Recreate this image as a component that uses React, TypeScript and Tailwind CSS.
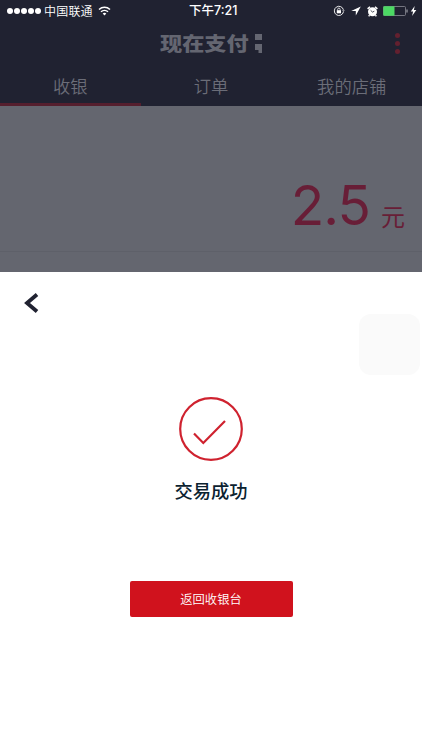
const tabs = [
  { label: "收银", active: true },
  { label: "订单", active: false },
  { label: "我的店铺", active: false },
];

function StatusBar() {
  return (
    <div className="relative flex h-[22px] items-center justify-between pl-[7px] pr-[5px] text-white">
      <div className="flex items-center">
        <div className="flex gap-[1px]">
          {[0, 1, 2, 3, 4].map((dot) => (
            <span key={dot} className="size-[6px] rounded-full bg-white" />
          ))}
        </div>
        <span className="ml-[3px] text-[12px] font-[350] leading-none tracking-[0.2px]">中国联通</span>
        <svg className="ml-[5px]" width="13" height="10" viewBox="0 0 13 10" fill="none" stroke="currentColor" strokeWidth="1.5">
          <path d="M1 3.5C4.2.5 8.8.5 12 3.5" />
          <path d="M3 5.8c2-1.9 5-1.9 7 0" />
          <path d="M4.7 7.5c1-.9 2.6-.9 3.6 0L6.5 9.4Z" fill="currentColor" stroke="none" />
        </svg>
      </div>
      <span className="absolute left-[189px] text-[12.5px] font-medium leading-none">
        下午<span className="font-['Inter']">7:21</span>
      </span>
      <div className="flex items-center">
        <svg width="12" height="12" viewBox="0 0 12 12" fill="none" stroke="currentColor">
          <path d="M10.4 7A4.6 4.6 0 1 1 10.4 4.8" strokeWidth="0.9" />
          <path d="m9 5.4 1.5 1.3L11.8 5.4Z" fill="currentColor" stroke="none" />
          <rect x="3.8" y="5.2" width="4.2" height="3.1" fill="currentColor" stroke="none" />
          <path d="M4.7 5.4V4.3a1.2 1.2 0 0 1 2.4 0v1.1" strokeWidth="0.8" />
        </svg>
        <svg className="ml-[6px]" width="10" height="10" viewBox="0 0 10 10" fill="currentColor">
          <path d="M9.8.4.2 5h4.6v4.6Z" />
        </svg>
        <svg className="ml-[6px]" width="11" height="11" viewBox="0 0 11 11">
          <circle cx="5.5" cy="5.8" r="4.5" fill="currentColor" />
          <path d="M.6 2.9 3 .8M8 .8l2.4 2.1M2.6 9.2l-1 1M8.4 9.2l1 1" stroke="currentColor" strokeWidth="1.5" />
          <path d="M3.6 4.3 5.5 6.1 7.3 5.2" stroke="#202231" strokeWidth="0.8" fill="none" />
        </svg>
        <svg className="ml-[5px]" width="26" height="10" viewBox="0 0 26 10">
          <rect x="0.5" y="0.5" width="22" height="9" rx="1" fill="none" stroke="#8b8c95" strokeWidth="0.8" />
          <rect x="0.3" y="0.3" width="11.2" height="9.4" rx="0.6" fill="#4cd964" />
          <rect x="23.3" y="3.3" width="1.4" height="3.4" rx="0.7" fill="#8b8c95" />
        </svg>
        <svg className="ml-[1px]" width="7" height="10" viewBox="0 0 7 10" fill="currentColor">
          <path d="M4.7 0 .8 5.6h2.3L2.1 10 6.3 4H3.9Z" />
        </svg>
      </div>
    </div>
  );
}

function Header() {
  return (
    <header className="h-[106px] bg-[#202231]">
      <StatusBar />
      <div className="flex h-[44px] items-center pl-[160px] pr-[22px]">
        <div className="flex items-center pb-[4px] text-[#646671]">
          <span className="block origin-center scale-y-[0.86] whitespace-nowrap text-[22.2px] font-black leading-none">
            现在支付
          </span>
          <svg className="ml-[5px] mt-[3px]" width="8" height="21" viewBox="0 0 8 21" fill="currentColor">
            <path d="M1 1h7v6H1ZM1 11h7v9H4.5v-3H1Z" />
          </svg>
        </div>
        <div className="ml-auto flex flex-col gap-[3px] pb-[2px]">
          <span className="size-[5px] rounded-full bg-[#63202f]" />
          <span className="size-[5px] rounded-full bg-[#63202f]" />
          <span className="size-[5px] rounded-full bg-[#63202f]" />
        </div>
      </div>
      <nav className="grid h-[40px] grid-cols-3">
        {tabs.map((tab) => (
          <div
            key={tab.label}
            className={`flex items-center justify-center border-b-[3px] pt-[3px] text-[17.3px] font-[350] leading-none text-[#6b6d78] ${
              tab.active ? "border-[#551f2e]" : "border-transparent"
            }`}
          >
            {tab.label}
          </div>
        ))}
      </nav>
    </header>
  );
}

function Amount() {
  return (
    <section className="h-[166px] bg-[#64666f]">
      <div className="flex h-[146px] items-baseline justify-end border-b border-[#5e6069] pr-[17px] pt-[64px] text-[#681e37]">
        <span className="font-['Inter'] text-[55px] font-normal leading-[70px] tracking-[-0.9px]">2.5</span>
        <span className="ml-[11px] translate-y-[1px] text-[24px] font-normal leading-none">元</span>
      </div>
    </section>
  );
}

export default function App() {
  return (
    <div className="flex h-[750px] w-[422px] flex-col overflow-hidden bg-white font-['Noto_Sans_CJK_SC',sans-serif]">
      <Header />
      <Amount />
      <main className="relative flex flex-1 flex-col items-center">
        <svg className="mt-[20px] ml-[24px] self-start" width="16" height="22" viewBox="0 0 16 22" fill="none" stroke="#202231" strokeWidth="3.8">
          <path d="M13 2.5 3 11l10 8.5" />
        </svg>
        <div className="absolute right-[2px] top-[42px] size-[61px] rounded-[12px] bg-[#fafafa]" />
        <svg className="mt-[83px]" width="64" height="64" viewBox="0 0 64 64" fill="none" stroke="#cf222f">
          <circle cx="32" cy="32" r="30.8" strokeWidth="2.2" />
          <path d="M15 36.5 24.3 46 46 24" strokeWidth="2.2" />
        </svg>
        <p className="mt-[20px] text-[18.3px] font-medium leading-[18px] text-[#0b2230]">交易成功</p>
        <button className="mt-[82px] h-[36px] w-[163px] rounded-[2px] bg-[#d0121d] text-[12.3px] font-[350] leading-none text-white">
          返回收银台
        </button>
      </main>
    </div>
  );
}
